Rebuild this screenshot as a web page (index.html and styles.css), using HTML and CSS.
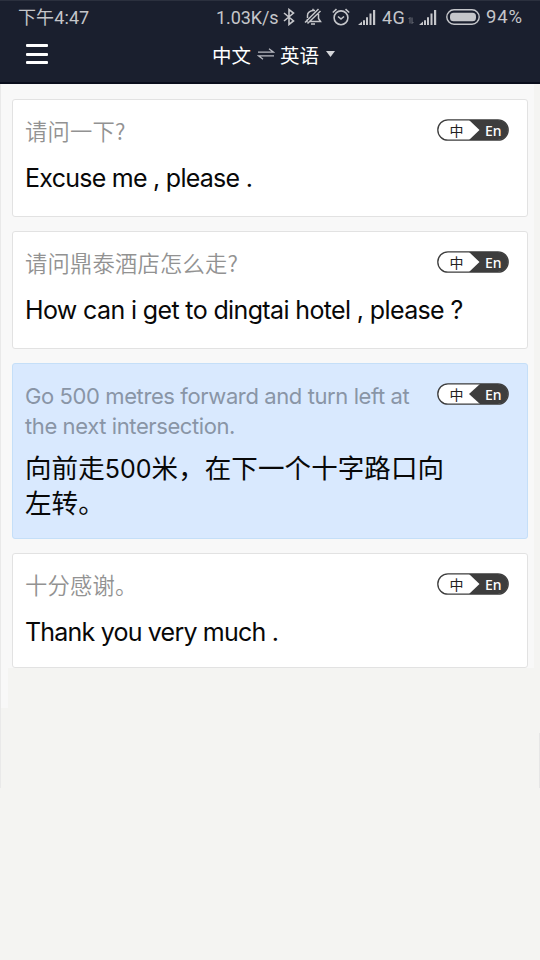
FILE: index.html
```html
<!DOCTYPE html>
<html lang="zh-CN">
<head>
<meta charset="utf-8">
<title>中文 ⇌ 英语</title>
<link rel="stylesheet" href="styles.css">
</head>
<body>
<svg class="defs" width="0" height="0">
  <symbol id="signal" viewBox="0 0 18 16"><path d="M0 16 4 12.500V16zM5 11.300h2V16H5zM8 8.200h2V16H8zM11.500 4.500h2V16h-2zM15 1h2.200v15H15z" fill="currentColor"/></symbol>
</svg>
<header class="top">
  <div class="status">
    <span class="time">下午4:47</span>
    <span class="speed">1.03K/s</span>
    <svg class="bt" viewBox="0 0 12 18"><path d="M1 5l9.500 8L6 16.500v-15L10.500 5 1 13" fill="none" stroke="currentColor" stroke-width="1.600"/></svg>
    <svg class="bell" viewBox="0 0 18 18"><g fill="none" stroke="currentColor" stroke-width="1.500"><path d="M3.500 10V7.500C3.500 4.500 5.500 3 9 2.500h2M14.500 6v4.500l2 3H6M1.500 13.500H3L3.500 11M7 16h4M9 .8v2M1 14.500 14.500 1M3.500 15.500 16.500 3"/></g></svg>
    <svg class="alarm" viewBox="0 0 18 18"><g fill="none" stroke="currentColor" stroke-width="1.600"><circle cx="9" cy="9.800" r="6.900"/><path d="M6 8.500l3 2.500 3-2.500M.8 4.500 4.500 1.200M17.200 4.500l-3.700-3.300"/></g></svg>
    <svg class="sig1"><use href="#signal"/></svg>
    <span class="net">4G</span>
    <svg class="data" viewBox="0 0 6 7"><path d="M2 6.500v-6L.5 2M4 .5v6L5.500 5" fill="none" stroke="currentColor" stroke-width=".8"/></svg>
    <svg class="sig2"><use href="#signal"/></svg>
    <svg class="batt" viewBox="0 0 34 16"><rect x=".8" y=".8" width="32.400" height="14.400" rx="7.200" fill="none" stroke="currentColor" stroke-width="1.400"/><rect x="4" y="3.700" width="26" height="8.600" rx="3.500" fill="currentColor"/></svg>
    <span class="pct">94%</span>
  </div>
  <div class="nav">
    <div class="menu"><i></i><i></i><i></i></div>
    <div class="langs">
      <span>中文</span>
      <svg class="swap" viewBox="0 0 18 12"><path d="M1 4.200h15.500L12 .8M17 7.800H1.500L6 11.200" fill="none" stroke="currentColor" stroke-width="1.200"/></svg>
      <span>英语</span>
      <svg class="caret" viewBox="0 0 9 6"><path d="M0 0h9L4.500 6z" fill="currentColor"/></svg>
    </div>
  </div>
</header>
<main class="page">
  <div class="list">
    <article class="card">
      <div class="copy"><p class="src">请问一下?</p><p class="dst short">Excuse me , please .</p></div>
      <svg class="badge" viewBox="0 0 72 22"><rect x="1" y="1" width="70" height="20" rx="10" fill="#fff"/><path d="M32 1h29a10 10 0 0 1 0 20H32L42.500 11z" fill="#3d3d3d"/><rect x=".8" y=".8" width="70.400" height="20.400" rx="10.200" fill="none" stroke="#3d3d3d" stroke-width="1.300"/><text class="zh" x="12.500" y="16.500">中</text><text class="en" x="48" y="16.500">En</text></svg>
    </article>
    <article class="card">
      <div class="copy"><p class="src">请问鼎泰酒店怎么走?</p><p class="dst">How can i get to dingtai hotel , please ?</p></div>
      <svg class="badge" viewBox="0 0 72 22"><rect x="1" y="1" width="70" height="20" rx="10" fill="#fff"/><path d="M32 1h29a10 10 0 0 1 0 20H32L42.500 11z" fill="#3d3d3d"/><rect x=".8" y=".8" width="70.400" height="20.400" rx="10.200" fill="none" stroke="#3d3d3d" stroke-width="1.300"/><text class="zh" x="12.500" y="16.500">中</text><text class="en" x="48" y="16.500">En</text></svg>
    </article>
    <article class="card active">
      <div class="copy"><p class="src latin">Go 500 metres forward and turn left at<br>the next intersection.</p><p class="dst cjk">向前走<span class="num">500</span>米，在下一个十字路口向<br>左转。</p></div>
      <svg class="badge" viewBox="0 0 72 22"><rect x="1" y="1" width="70" height="20" rx="10" fill="#fff"/><path d="M43 1h18a10 10 0 0 1 0 20H43L32 11z" fill="#3d3d3d"/><rect x=".8" y=".8" width="70.400" height="20.400" rx="10.200" fill="none" stroke="#3d3d3d" stroke-width="1.300"/><text class="zh" x="12.500" y="16.500">中</text><text class="en" x="48" y="16.500">En</text></svg>
    </article>
    <article class="card last">
      <div class="copy"><p class="src">十分感谢。</p><p class="dst short thanks">Thank you very much .</p></div>
      <svg class="badge" viewBox="0 0 72 22"><rect x="1" y="1" width="70" height="20" rx="10" fill="#fff"/><path d="M32 1h29a10 10 0 0 1 0 20H32L42.500 11z" fill="#3d3d3d"/><rect x=".8" y=".8" width="70.400" height="20.400" rx="10.200" fill="none" stroke="#3d3d3d" stroke-width="1.300"/><text class="zh" x="12.500" y="16.500">中</text><text class="en" x="48" y="16.500">En</text></svg>
    </article>
  </div>
</main>
</body>
</html>
```
FILE: styles.css
```css
* { box-sizing: border-box; }
body {
  margin: 0; width: 540px; height: 960px; overflow: hidden;
  font-family: Roboto, "Noto Sans CJK SC", sans-serif;
  background:
    linear-gradient(#e9e9e9, #e9e9e9) 0 84px / 1px 704px no-repeat,
    linear-gradient(#e6e6e6, #e6e6e6) 539px 733px / 1px 55px no-repeat,
    linear-gradient(#f8f8f8, #f8f8f8) 0 84px / 8px 624px no-repeat,
    linear-gradient(#f8f8f8, #f8f8f8) 0 84px / 534px 584px no-repeat,
    #f4f4f2;
}
p { margin: 0; }
svg { display: block; flex: none; }
.defs { display: none; }
.top { height: 84px; background: #1a1f2e; border-top: 1px solid #2b303e; border-bottom: 2px solid #090d1c; color: #fff; }
.status { display: flex; align-items: center; height: 32px; padding-left: 18px; color: #c5c6ca; font-size: 18px; white-space: nowrap; }
.status > * { flex: none; }
.time { width: 198px; margin-top: -2px; letter-spacing: .1px; }
.speed { width: 65px; letter-spacing: -.1px; }
.bt { width: 12px; height: 18px; margin-left: 2px; }
.bell { width: 18px; height: 18px; margin-left: 9px; }
.alarm { width: 18px; height: 18px; margin-left: 10px; }
.sig1, .sig2 { width: 18px; height: 16px; }
.sig1 { margin-left: 8px; }
.net { width: 25px; margin-left: 6px; letter-spacing: .3px; }
.data { width: 6px; height: 7px; margin: 6px 4px 0 1px; opacity: .6; }
.sig2 { margin-left: 1px; }
.batt { width: 34px; height: 16px; margin-left: 9px; }
.pct { margin-left: 6px; font-size: 18.500px; letter-spacing: .8px; }
.nav { display: flex; align-items: center; height: 42px; padding-left: 26px; }
.menu { width: 22px; display: flex; flex-direction: column; gap: 5.500px; }
.menu i { height: 3px; border-radius: 1px; background: #fff; }
.langs { display: flex; align-items: center; margin: 0 0 0 164px; font-size: 19.500px; font-family: "Noto Sans CJK SC", sans-serif; }
.swap { width: 18px; height: 12px; margin: 0 5.500px; color: #b9bbc2; }
.caret { width: 9px; height: 6px; margin-left: 7px; color: #d4d5d9; }
.list { display: flex; flex-direction: column; gap: 14px; padding: 15px 12px 0; height: 584px; }
.card { display: flex; justify-content: space-between; flex: none; width: 516px; height: 118px; padding: 14px 18px 0 12px; background: #fff; border: 1px solid #e2e2e2; border-radius: 3px; }
.card.active { height: 176px; padding-top: 16px; background: #d9e9fe; border-color: #c5dff8; }
.card.last { height: 115px; }
.copy { width: 412px; white-space: nowrap; }
.src { font: 350 22.300px/32px "Noto Sans CJK SC", sans-serif; letter-spacing: .2px; color: #929292; }
.dst { margin-top: 16px; font: 400 25px/32px Inter, "Noto Sans CJK SC", sans-serif; letter-spacing: -.63px; color: #080808; }
.dst.short { letter-spacing: -.74px; }
.dst.thanks { letter-spacing: -.8px; }
.src.latin { padding-top: 1px; font: 400 22px/30px Inter, sans-serif; letter-spacing: -.4px; color: #8995a6; }
.dst.cjk { margin-top: 8px; font: 400 26.500px/35px "Noto Sans CJK SC", sans-serif; letter-spacing: .1px; }
.num { font: 400 25px/30px Inter, sans-serif; letter-spacing: 0; }
.badge { width: 72px; height: 22px; margin-top: 5px; }
.active .badge { margin-top: 3px; }
.zh { font: 400 14px "Noto Sans CJK SC", sans-serif; fill: #222; }
.en { font: 500 14px "Noto Sans", sans-serif; fill: #fff; }
```
